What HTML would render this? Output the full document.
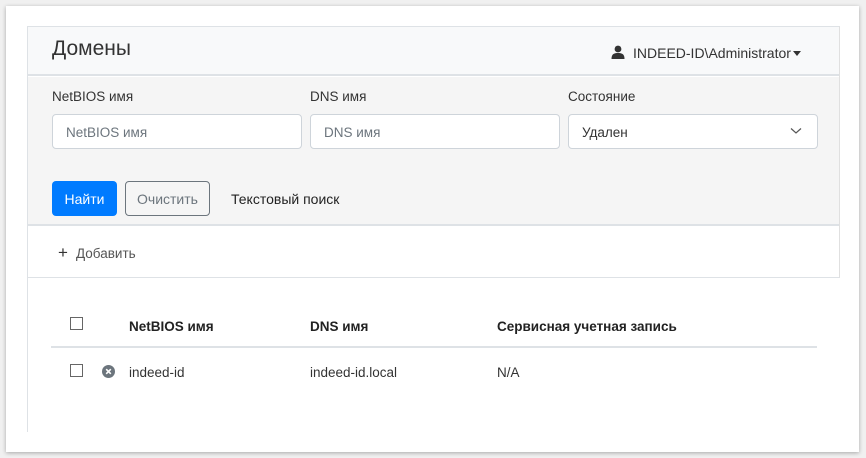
<!DOCTYPE html>
<html><head><meta charset="utf-8"><style>
*{box-sizing:border-box;margin:0;padding:0}
body{width:866px;height:458px;background:#f0f0f0;font-family:"Liberation Sans","Noto Sans CJK SC",sans-serif;color:#212529;position:relative;overflow:hidden}
.a{position:absolute}
.frame{left:6px;top:6px;width:853px;height:446px;background:#fff;box-shadow:0 1px 4px rgba(0,0,0,.3)}
.lbl{font-size:13.5px;color:#333}
.inp{background:#fff;border:1px solid #ced4da;border-radius:4px;height:35px;font-size:13.5px;color:#6c757d;padding:10px 13px}
.th{font-size:13.5px;font-weight:bold;color:#222}
.td{font-size:13.5px;color:#333}
.cb{width:13px;height:13px;border:1px solid #666;background:#fff}
</style></head><body>
<div class="a frame"></div>
<div class="a" style="left:27px;top:26px;width:813px;height:252px;border:1px solid #dee2e6;border-right-color:#e0e0e0"></div>
<div class="a" style="left:27px;top:278px;width:1px;height:154px;background:#dee2e6"></div>
<div class="a" style="left:28px;top:27px;width:811px;height:49px;background:#f8f9fa;border-bottom:2px solid #dee2e6"></div>
<div class="a" style="left:52px;top:37px;font-size:21px;color:#333">Домены</div>
<svg class="a" style="left:611px;top:45px" width="14" height="14" viewBox="0 0 14 14"><circle cx="7" cy="4" r="3.4" fill="#333"/><path d="M0.5 14 C0.5 9 3 8 7 8 C11 8 13.5 9 13.5 14Z" fill="#333"/></svg>
<div class="a" style="left:633px;top:45px;font-size:14px;color:#333">INDEED-ID\Administrator</div>
<div class="a" style="left:793px;top:51px;border:4px solid transparent;border-top:5px solid #333;border-bottom:0"></div>
<div class="a" style="left:28px;top:77px;width:811px;height:149px;background:#f5f5f5;border-bottom:2px solid #dee2e6"></div>
<div class="a lbl" style="left:52px;top:89px">NetBIOS имя</div>
<div class="a lbl" style="left:310px;top:89px">DNS имя</div>
<div class="a lbl" style="left:568px;top:89px">Состояние</div>
<div class="a inp" style="left:52px;top:114px;width:250px">NetBIOS имя</div>
<div class="a inp" style="left:310px;top:114px;width:250px">DNS имя</div>
<div class="a inp" style="left:568px;top:114px;width:250px;color:#333">Удален</div>
<svg class="a" style="left:790px;top:127px" width="12" height="8" viewBox="0 0 12 8"><path d="M1 1.5 L6 6 L11 1.5" fill="none" stroke="#555" stroke-width="1.2"/></svg>
<div class="a" style="left:52px;top:181px;width:65px;height:35px;background:#007bff;border-radius:4px;color:#fff;font-size:14px;text-align:center;line-height:36px">Найти</div>
<div class="a" style="left:125px;top:181px;width:85px;height:35px;border:1px solid #6c757d;border-radius:4px;color:#6c757d;font-size:14px;text-align:center;line-height:34px">Очистить</div>
<div class="a" style="left:231px;top:191px;font-size:14px;color:#222">Текстовый поиск</div>
<div class="a" style="left:58px;top:243px;font-size:17px;color:#333;line-height:20px">+</div>
<div class="a" style="left:76px;top:246px;font-size:13.5px;color:#555">Добавить</div>
<div class="a cb" style="left:70px;top:317px"></div>
<div class="a th" style="left:129px;top:319px">NetBIOS имя</div>
<div class="a th" style="left:310px;top:319px">DNS имя</div>
<div class="a th" style="left:497px;top:319px">Сервисная учетная запись</div>
<div class="a" style="left:51px;top:346px;width:766px;height:2px;background:#dee2e6"></div>
<div class="a cb" style="left:70px;top:364px"></div>
<svg class="a" style="left:102px;top:365px" width="13" height="13" viewBox="0 0 13 13"><circle cx="6.5" cy="6.5" r="6.5" fill="#6c757d"/><path d="M4.2 4.2 L8.8 8.8 M8.8 4.2 L4.2 8.8" stroke="#fff" stroke-width="1.6"/></svg>
<div class="a td" style="left:129px;top:365px">indeed-id</div>
<div class="a td" style="left:310px;top:365px">indeed-id.local</div>
<div class="a td" style="left:497px;top:365px">N/A</div>
</body></html>
